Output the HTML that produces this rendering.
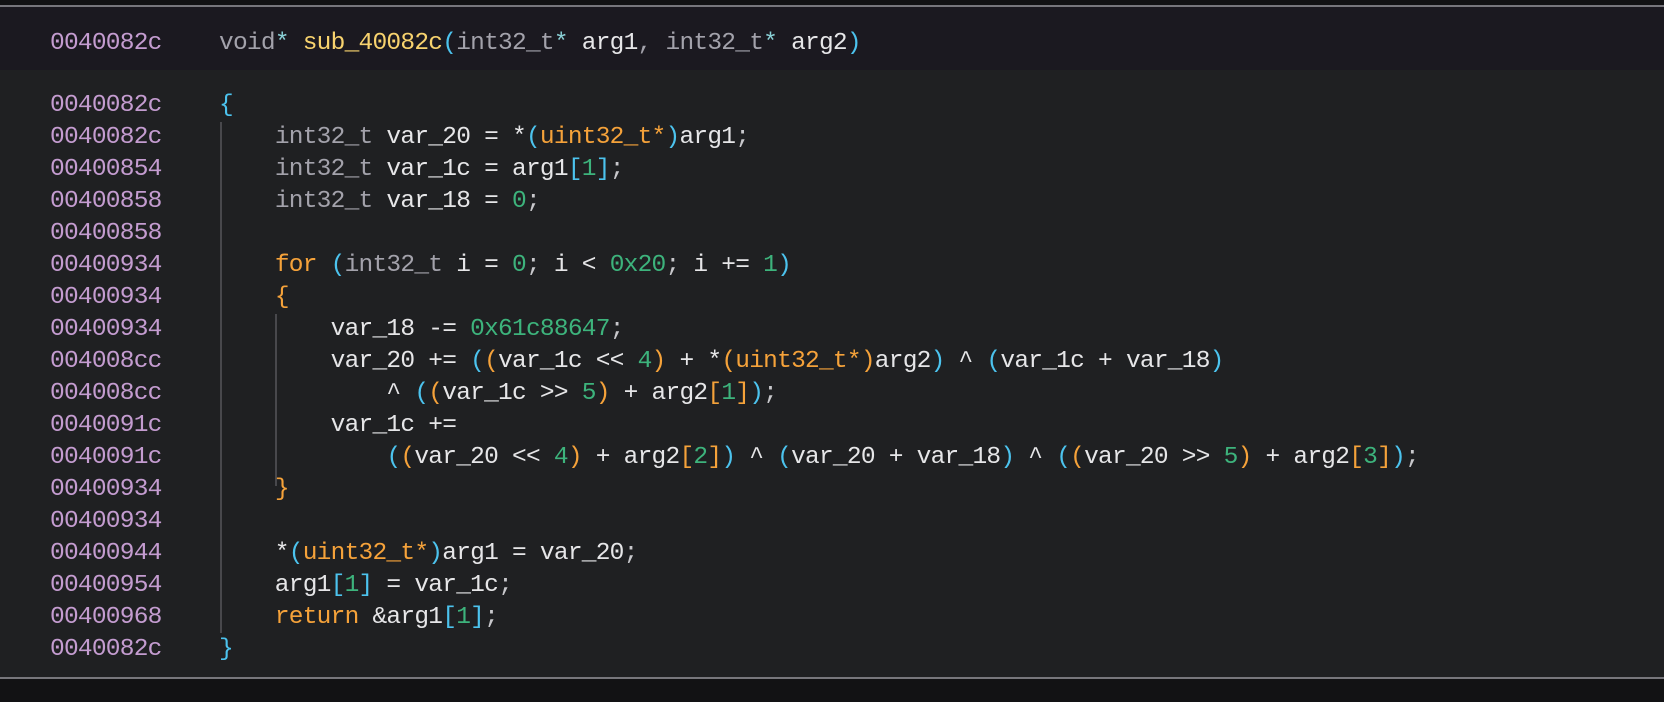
<!DOCTYPE html>
<html><head><meta charset="utf-8"><style>
html,body{margin:0;padding:0;}
body{width:1664px;height:702px;background:#1f2022;position:relative;overflow:hidden;font-family:"Liberation Mono",monospace;font-size:24.5px;letter-spacing:-0.75px;color:#e6e6e8;}
.top{position:absolute;left:0;top:0;width:1664px;height:5px;background:#121214;}
.tl{position:absolute;left:0;top:5px;width:1664px;height:2px;background:#77767c;}
.hdr{position:absolute;left:0;top:7px;width:1664px;height:63px;background:#1b1920;}
.bl{position:absolute;left:0;top:677px;width:1664px;height:2px;background:#77767c;}
.bot{position:absolute;left:0;top:679px;width:1664px;height:23px;background:#121214;}
.w{position:absolute;left:0;top:2px;width:1664px;height:670px;}
.r{position:absolute;left:0;height:32px;line-height:32px;white-space:pre;}
.a{position:absolute;left:50px;color:#c49cd0;}
.c{position:absolute;left:219px;}
.t{color:#a3a2ab}.n{color:#3db37c}.p{color:#4cc3ee}.o{color:#f5a23a}.y{color:#f8d36e}.s{color:#8ad0d6}.m{color:#c8c8cc}
.g{position:absolute;width:2px;background:#48484c;}
</style></head><body>
<div class="top"></div><div class="tl"></div><div class="hdr"></div>
<div class="r" style="top:28px"><span class="a">0040082c</span><span class="c"><span class="t">void</span><span class="s">*</span> <span class="y">sub_40082c</span><span class="p">(</span><span class="t">int32_t</span><span class="s">*</span> arg1<span class="t">,</span> <span class="t">int32_t</span><span class="s">*</span> arg2<span class="p">)</span></span></div>
<div class="w">
<div class="g" style="left:220px;top:120px;height:511px"></div>
<div class="g" style="left:275px;top:312px;height:172px"></div>

<div class="r" style="top:88px"><span class="a">0040082c</span><span class="c"><span class="p">{</span></span></div>
<div class="r" style="top:120px"><span class="a">0040082c</span><span class="c">    <span class="t">int32_t</span> var_20 = *<span class="p">(</span><span class="o">uint32_t*</span><span class="p">)</span>arg1<span class="m">;</span></span></div>
<div class="r" style="top:152px"><span class="a">00400854</span><span class="c">    <span class="t">int32_t</span> var_1c = arg1<span class="p">[</span><span class="n">1</span><span class="p">]</span><span class="m">;</span></span></div>
<div class="r" style="top:184px"><span class="a">00400858</span><span class="c">    <span class="t">int32_t</span> var_18 = <span class="n">0</span><span class="m">;</span></span></div>
<div class="r" style="top:216px"><span class="a">00400858</span></div>
<div class="r" style="top:248px"><span class="a">00400934</span><span class="c">    <span class="o">for</span> <span class="p">(</span><span class="t">int32_t</span> i = <span class="n">0</span><span class="m">;</span> i &lt; <span class="n">0x20</span><span class="m">;</span> i += <span class="n">1</span><span class="p">)</span></span></div>
<div class="r" style="top:280px"><span class="a">00400934</span><span class="c">    <span class="o">{</span></span></div>
<div class="r" style="top:312px"><span class="a">00400934</span><span class="c">        var_18 -= <span class="n">0x61c88647</span><span class="m">;</span></span></div>
<div class="r" style="top:344px"><span class="a">004008cc</span><span class="c">        var_20 += <span class="p">(</span><span class="o">(</span>var_1c &lt;&lt; <span class="n">4</span><span class="o">)</span> + *<span class="o">(uint32_t*)</span>arg2<span class="p">)</span> ^ <span class="p">(</span>var_1c + var_18<span class="p">)</span></span></div>
<div class="r" style="top:376px"><span class="a">004008cc</span><span class="c">            ^ <span class="p">(</span><span class="o">(</span>var_1c &gt;&gt; <span class="n">5</span><span class="o">)</span> + arg2<span class="o">[</span><span class="n">1</span><span class="o">]</span><span class="p">)</span><span class="m">;</span></span></div>
<div class="r" style="top:408px"><span class="a">0040091c</span><span class="c">        var_1c +=</span></div>
<div class="r" style="top:440px"><span class="a">0040091c</span><span class="c">            <span class="p">(</span><span class="o">(</span>var_20 &lt;&lt; <span class="n">4</span><span class="o">)</span> + arg2<span class="o">[</span><span class="n">2</span><span class="o">]</span><span class="p">)</span> ^ <span class="p">(</span>var_20 + var_18<span class="p">)</span> ^ <span class="p">(</span><span class="o">(</span>var_20 &gt;&gt; <span class="n">5</span><span class="o">)</span> + arg2<span class="o">[</span><span class="n">3</span><span class="o">]</span><span class="p">)</span><span class="m">;</span></span></div>
<div class="r" style="top:472px"><span class="a">00400934</span><span class="c">    <span class="o">}</span></span></div>
<div class="r" style="top:504px"><span class="a">00400934</span></div>
<div class="r" style="top:536px"><span class="a">00400944</span><span class="c">    *<span class="p">(</span><span class="o">uint32_t*</span><span class="p">)</span>arg1 = var_20<span class="m">;</span></span></div>
<div class="r" style="top:568px"><span class="a">00400954</span><span class="c">    arg1<span class="p">[</span><span class="n">1</span><span class="p">]</span> = var_1c<span class="m">;</span></span></div>
<div class="r" style="top:600px"><span class="a">00400968</span><span class="c">    <span class="o">return</span> &amp;arg1<span class="p">[</span><span class="n">1</span><span class="p">]</span><span class="m">;</span></span></div>
<div class="r" style="top:632px"><span class="a">0040082c</span><span class="c"><span class="p">}</span></span></div>
</div>
<div class="bl"></div><div class="bot"></div>
</body></html>
